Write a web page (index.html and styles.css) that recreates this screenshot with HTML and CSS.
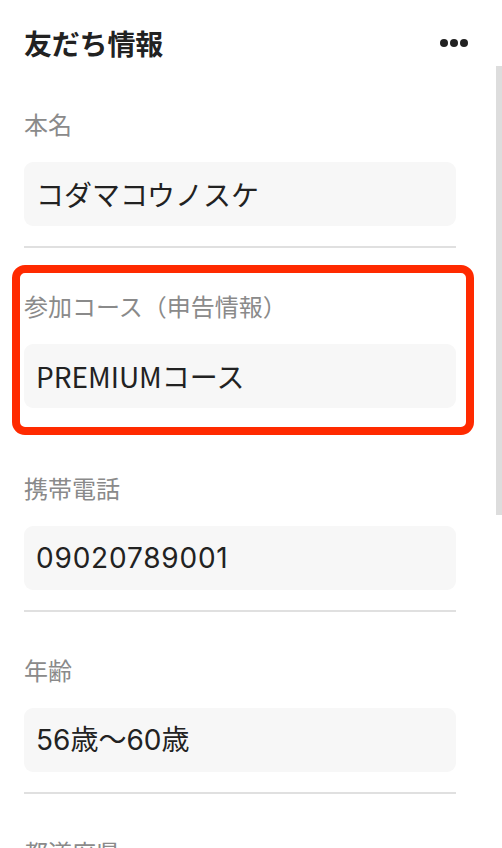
FILE: index.html
```html
<!DOCTYPE html>
<html lang="ja">
<head>
<meta charset="utf-8">
<title>友だち情報</title>
<link rel="stylesheet" href="styles.css">
</head>
<body>
<div class="panel">
  <header class="header">
    <h1 class="title">友だち情報</h1>
    <button class="more" aria-label="その他">
      <svg width="28" height="8" viewBox="0 0 28 8"><circle cx="4" cy="4" r="4"/><circle cx="14" cy="4" r="4"/><circle cx="24" cy="4" r="4"/></svg>
    </button>
  </header>
  <div class="content">
    <section class="field">
      <div class="label">本名</div>
      <div class="value">コダマコウノスケ</div>
      <hr class="divider">
    </section>
    <section class="field">
      <div class="label">参加コース（申告情報）</div>
      <div class="value">PREMIUMコース</div>
      <hr class="divider">
      <div class="highlight"></div>
    </section>
    <section class="field">
      <div class="label">携帯電話</div>
      <div class="value value-phone">09020789001</div>
      <hr class="divider">
    </section>
    <section class="field">
      <div class="label">年齢</div>
      <div class="value value-num">56歳〜60歳</div>
      <hr class="divider">
    </section>
    <section class="field">
      <div class="label">都道府県</div>
      <div class="value">&nbsp;</div>
      <hr class="divider">
    </section>
  </div>
  <div class="scroll-thumb"></div>
</div>
</body>
</html>
```

FILE: styles.css
```css
html, body {
  margin: 0;
  padding: 0;
  background: #ffffff;
  overflow: hidden;
}
body {
  font-family: "Noto Sans CJK JP", "Noto Sans", sans-serif;
  color: #222222;
  width: 502px;
  height: 848px;
}
.panel {
  position: relative;
  height: 848px;
  overflow: hidden;
}
.header {
  height: 66px;
  box-sizing: border-box;
  padding: 20px 34px 0 24px;
  display: flex;
  align-items: center;
  justify-content: space-between;
}
.title {
  margin: 0;
  font-size: 28px;
  font-weight: 700;
  line-height: 40px;
  color: #222222;
  letter-spacing: -0.2px;
}
.more {
  border: 0;
  background: none;
  padding: 0;
  margin: 0;
  display: flex;
  fill: #222222;
}
.content {
  padding: 42px 46px 0 24px;
}
.field {
  position: relative;
  padding-top: 42px;
}
.field:first-child {
  padding-top: 0;
}
.label {
  font-size: 24px;
  line-height: 32px;
  color: #8a8a8a;
  margin-bottom: 22px;
}
.value {
  height: 64px;
  box-sizing: border-box;
  background: #f7f7f7;
  border-radius: 9px;
  padding: 0 12px;
  font-size: 28px;
  line-height: 64px;
  color: #222222;
}
.value-num,
.value-phone {
  font-family: "Inter", "Noto Sans CJK JP", sans-serif;
}
.value-phone {
  letter-spacing: 0.8px;
}
.divider {
  margin: 20px 0 0 0;
  border: 0;
  height: 2px;
  background: #e0e0e0;
}
.highlight {
  position: absolute;
  top: 17px;
  left: -12px;
  width: 462px;
  height: 170px;
  box-sizing: border-box;
  border: 8px solid #ff2a00;
  border-radius: 13px;
  pointer-events: none;
}
.scroll-thumb {
  position: absolute;
  right: 0;
  top: 66px;
  width: 6px;
  height: 449px;
  background: #dddddd;
}
```
